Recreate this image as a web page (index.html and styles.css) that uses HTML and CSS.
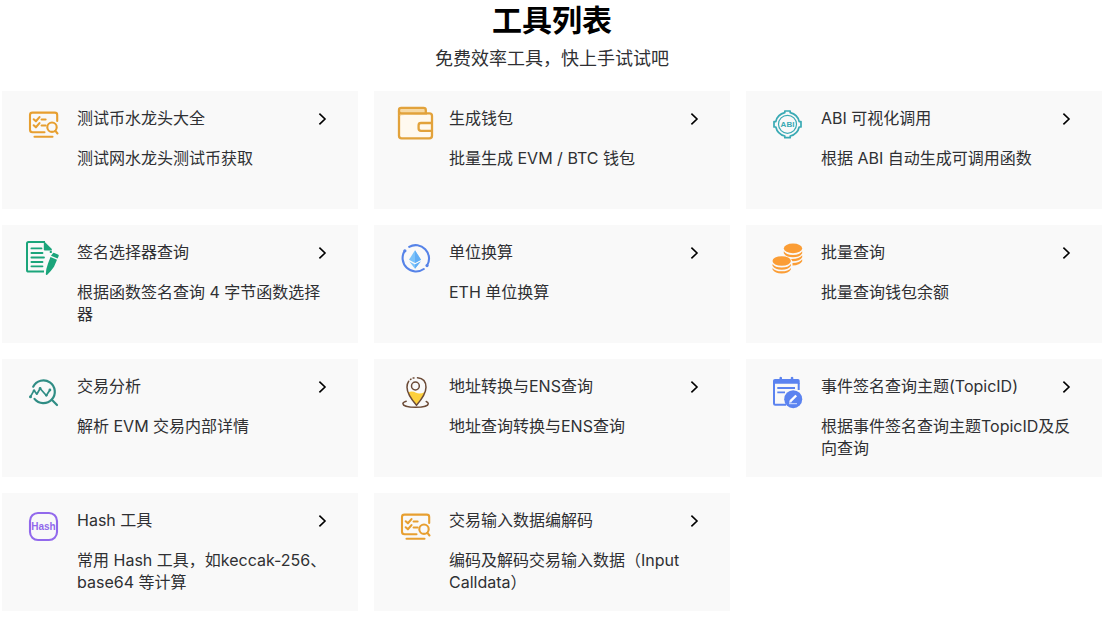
FILE: index.html
```html
<!DOCTYPE html>
<html lang="zh-CN">
<head>
<meta charset="utf-8">
<meta name="viewport" content="width=device-width, initial-scale=1">
<title>工具列表</title>
<link rel="stylesheet" href="styles.css">
</head>
<body>
<svg class="symbols" aria-hidden="true">
  <symbol id="checklist" viewBox="9 8 40 40">
    <g fill="none" stroke="#e79f30" stroke-width="2.1" stroke-linecap="round" stroke-linejoin="round">
      <path d="M29.5 37.2H17.5Q15 37.2 15 34.7V20Q15 17.6 17.5 17.6H39.8Q42.2 17.6 42.2 20V26"/>
      <path d="M18.7 24.3l2.2 2 3.6-4.2M26.6 24.5h4M18.7 30.3l2.2 2 3.6-4.2M26.6 30.5h4M19.5 41.8h18"/>
      <circle cx="37" cy="32.2" r="4.7"/><path d="M40.4 35.8l2.1 2.7"/>
    </g>
  </symbol>
  <symbol id="chevron" viewBox="0 0 16 16">
    <path d="M5.4 3.6L11 9L5.4 14.4" fill="none" stroke="#000" stroke-width="1.6"/>
  </symbol>
</svg>
<main class="page">
  <header class="heading">
    <h1 class="heading-title">工具列表</h1>
    <p class="heading-note">免费效率工具，快上手试试吧</p>
  </header>
  <div class="grid">
    <a class="card" href="#">
      <svg class="icon" aria-hidden="true"><use href="#checklist"/></svg>
      <div class="body">
        <h2 class="title">测试币水龙头大全<svg class="arrow" aria-hidden="true"><use href="#chevron"/></svg></h2>
        <p class="text">测试网水龙头测试币获取</p>
      </div>
    </a>
    <a class="card" href="#">
      <svg class="icon" viewBox="6 8 40 40" aria-hidden="true">
        <g fill="none" stroke="#e2a23b" stroke-width="2.3" stroke-linejoin="round">
          <rect x="9" y="18.3" width="33" height="25" rx="2.6" fill="#fff9ef"/>
          <path d="M9 20.5V15Q9 12.9 11.2 12.9H33.5Q35.8 12.9 35.8 15V18.3" fill="#f6d9a4"/>
          <path d="M42 28H31Q28.6 28 28.6 30.3V33.5Q28.6 35.8 31 35.8H42"/>
          <path d="M9 16.5Q9 18.3 11.5 18.3H37"/>
        </g>
      </svg>
      <div class="body">
        <h2 class="title">生成钱包<svg class="arrow" aria-hidden="true"><use href="#chevron"/></svg></h2>
        <p class="text">批量生成 EVM / BTC 钱包</p>
      </div>
    </a>
    <a class="card" href="#">
      <svg class="icon" viewBox="8 8 40 40" aria-hidden="true">
        <g fill="none" stroke="#39aab4" stroke-width="1.7" stroke-linejoin="round">
          <path d="M24.8 17.7V16H30.2V17.7Q37.6 19.5 39.2 26.6H41V32H39.2Q37.6 39.1 30.2 41V42.7H24.8V41Q17.4 39.1 15.8 32H14V26.6H15.8Q17.4 19.5 24.8 17.7Z"/>
          <circle cx="27.5" cy="29.3" r="9" stroke-width="1.2"/>
        </g>
        <text x="27.5" y="32" class="abi" text-anchor="middle">ABI</text>
      </svg>
      <div class="body">
        <h2 class="title">ABI 可视化调用<svg class="arrow" aria-hidden="true"><use href="#chevron"/></svg></h2>
        <p class="text">根据 ABI 自动生成可调用函数</p>
      </div>
    </a>
    <a class="card" href="#">
      <svg class="icon" viewBox="9 7 40 40" aria-hidden="true">
        <path d="M30 12H13.5Q12 12 12 13.5V40Q12 41.6 13.5 41.6H29M35.8 21V23" fill="none" stroke="#1ba57b" stroke-width="2"/>
        <path d="M28.8 11L36.8 19V20.5H29.8Q28.8 20.5 28.8 19.5Z" fill="#1ba57b"/>
        <path d="M16.4 18.4H26.5M16.4 23H27.5M16.4 27.5H29M16.4 32H27.5M16.4 36.3H27.5" stroke="#1ba57b" stroke-width="1.8" stroke-linecap="round"/>
        <path d="M37.7 23.4Q38.4 22.6 39.3 23L43 24.5Q44 25 43.7 26L42.6 28.5L36 25.8ZM35.5 27L42 29.7L39 36.7Q36 41.2 32 45Q30.8 45.2 30.8 44Q31 38.6 33 33.5Z" fill="#1ba57b"/>
      </svg>
      <div class="body">
        <h2 class="title">签名选择器查询<svg class="arrow" aria-hidden="true"><use href="#chevron"/></svg></h2>
        <p class="text">根据函数签名查询 4 字节函数选择器</p>
      </div>
    </a>
    <a class="card" href="#">
      <svg class="icon" viewBox="6 7 40 40" aria-hidden="true">
        <g fill="none" stroke="#5683e8" stroke-width="2.1" stroke-linecap="round">
          <path d="M19.2 16.8A13.4 13.4 0 0 1 37.2 35.3M33.8 39A13.4 13.4 0 0 1 14.7 20.9"/>
        </g>
        <circle cx="14.9" cy="20.8" r="1.6" fill="#5683e8"/><circle cx="37" cy="35.6" r="1.6" fill="#5683e8"/>
        <path d="M25 20.3L31 29.8L25 33L19 29.8Z" fill="#7bc3fa"/>
        <path d="M25 20.3L31 29.8L25 33Z" fill="#61aef5"/>
        <path d="M19.3 31.4L25 34.5L30.7 31.4L25 38.8Z" fill="#7bc3fa"/>
        <path d="M25 34.5L30.7 31.4L25 38.8Z" fill="#61aef5"/>
      </svg>
      <div class="body">
        <h2 class="title">单位换算<svg class="arrow" aria-hidden="true"><use href="#chevron"/></svg></h2>
        <p class="text">ETH 单位换算</p>
      </div>
    </a>
    <a class="card" href="#">
      <svg class="icon" viewBox="8 7 40 40" aria-hidden="true">
        <g fill="#fb9d35">
          <ellipse cx="33" cy="18.4" rx="9.2" ry="4.8"/>
          <path d="M23.8 21.3Q26 25 33 25Q40 25 42.2 21.3V23.2Q40 27.3 33 27.3Q26 27.3 23.8 23.2ZM31 29Q39.5 29.2 42.2 25.3V27.2Q40 31 32.5 31.3ZM32.5 33.1Q40 32.9 42.2 29.3V31.2Q40 35.2 32.5 35.5Z"/>
          <ellipse cx="21.7" cy="31" rx="9.2" ry="4.8"/>
          <path d="M12.5 34Q15 37.6 21.7 37.6Q28.4 37.6 30.9 34V35.8Q28.4 39.8 21.7 39.8Q15 39.8 12.5 35.8ZM12.5 37.9Q15 41.3 21.7 41.3Q28.4 41.3 30.9 37.9V39.5Q28.4 43.5 21.7 43.5Q15 43.5 12.5 39.5Z"/>
        </g>
      </svg>
      <div class="body">
        <h2 class="title">批量查询<svg class="arrow" aria-hidden="true"><use href="#chevron"/></svg></h2>
        <p class="text">批量查询钱包余额</p>
      </div>
    </a>
    <a class="card" href="#">
      <svg class="icon" viewBox="9 6 40 40" aria-hidden="true">
        <g fill="none" stroke="#308d85" stroke-width="2.2" stroke-linecap="round" stroke-linejoin="round">
          <path d="M18.2 21.7A11.4 11.4 0 1 1 19.5 33.9M36.8 34.8L42 40" />
          <path d="M15.5 31.7L19 25.3L21.8 29.2L25.1 23.5L31.3 30.5L34.9 25" stroke-width="1.7"/>
        </g>
        <g fill="#308d85"><circle cx="15.5" cy="31.7" r="1.5"/><circle cx="19" cy="25.7" r="1.3"/><circle cx="25.1" cy="23.5" r="1.4"/><circle cx="31.3" cy="30.3" r="1.3"/><circle cx="34.9" cy="25" r="1.4"/></g>
      </svg>
      <div class="body">
        <h2 class="title">交易分析<svg class="arrow" aria-hidden="true"><use href="#chevron"/></svg></h2>
        <p class="text">解析 EVM 交易内部详情</p>
      </div>
    </a>
    <a class="card" href="#">
      <svg class="icon" viewBox="6 6 40 40" aria-hidden="true">
        <path d="M18 27.5Q22 25.5 26 27.8Q30 29.7 34.7 27Q33 32 26.5 39.5Q20 33 18 27.5Z" fill="#fdd03c"/>
        <g fill="none" stroke="#6b4a36" stroke-width="1.5" stroke-linecap="round">
          <path d="M27.5 12.8Q36 13.5 36 22.3Q36 29.5 26.5 40.2Q17 29.5 17 22.3Q17 18.5 18.7 16.2M20.5 14.5L21 14.1M23.2 13.1L24 12.9"/>
          <circle cx="25.4" cy="21" r="3.9"/>
          <path d="M16.2 36.2Q12.8 37.2 12.9 38.7C13.3 43.5 38 43.5 38.3 38.7Q38.2 37.2 36.2 36.5"/>
        </g>
      </svg>
      <div class="body">
        <h2 class="title">地址转换与ENS查询<svg class="arrow" aria-hidden="true"><use href="#chevron"/></svg></h2>
        <p class="text">地址查询转换与ENS查询</p>
      </div>
    </a>
    <a class="card" href="#">
      <svg class="icon" viewBox="8 6 40 40" aria-hidden="true">
        <path d="M14 18V38.5Q14 39.7 15.2 39.7H26M38.7 18V25" fill="none" stroke="#5b83f0" stroke-width="2"/>
        <path d="M15 14H19.5V12.5Q20.7 11.2 22 12.5V14H30.8V12.5Q32 11.2 33.3 12.5V14H38Q39.7 14 39.7 15.7V18.8H13V15.7Q13 14 15 14Z" fill="#5b83f0"/>
        <path d="M17.3 23H35M17.3 27.3H25" stroke="#5b83f0" stroke-width="1.8"/>
        <circle cx="33.2" cy="34.2" r="9" fill="#5b83f0"/>
        <path d="M30.5 36.2L36.2 30.5" stroke="#fff" stroke-width="2.4"/><path d="M29.1 37.7L29.8 35.2L31.8 37.2Z" fill="#fff"/><path d="M29 38.7H37" stroke="#d6e1ff" stroke-width="1"/>
      </svg>
      <div class="body">
        <h2 class="title">事件签名查询主题(TopicID)<svg class="arrow" aria-hidden="true"><use href="#chevron"/></svg></h2>
        <p class="text">根据事件签名查询主题TopicID及反向查询</p>
      </div>
    </a>
    <a class="card" href="#">
      <svg class="icon" viewBox="9 5 40 40" aria-hidden="true">
        <rect x="15" y="13" width="27" height="27" rx="8" fill="none" stroke="#9269ec" stroke-width="2.1"/>
        <text x="28.5" y="30" class="hash" text-anchor="middle">Hash</text>
      </svg>
      <div class="body">
        <h2 class="title">Hash 工具<svg class="arrow" aria-hidden="true"><use href="#chevron"/></svg></h2>
        <p class="text">常用 Hash 工具，如keccak-256、base64 等计算</p>
      </div>
    </a>
    <a class="card" href="#">
      <svg class="icon" aria-hidden="true"><use href="#checklist"/></svg>
      <div class="body">
        <h2 class="title">交易输入数据编解码<svg class="arrow" aria-hidden="true"><use href="#chevron"/></svg></h2>
        <p class="text">编码及解码交易输入数据（Input Calldata）</p>
      </div>
    </a>
  </div>
</main>
</body>
</html>
```
FILE: styles.css
```css
* { box-sizing: border-box; }
body {
  margin: 0;
  background: #fff;
  color: #2f3033;
  font: 16px/22px Inter, "Noto Sans CJK SC", sans-serif;
}
.symbols { position: absolute; width: 0; height: 0; }
.page { padding: 0 10px 12px 2px; }
.heading { text-align: center; }
.heading-title {
  margin: 0;
  color: #000;
  font-size: 30px;
  line-height: 40px;
  font-weight: 700;
}
.heading-note {
  margin: 5px 0 18px;
  font-size: 18px;
  line-height: 28px;
}
.grid {
  display: grid;
  grid-template-columns: repeat(3, 1fr);
  gap: 16px;
}
.card {
  display: flex;
  gap: 13px;
  min-height: 118px;
  padding: 12px 28px 14px 22px;
  background: #f9f9f9;
  color: inherit;
  text-decoration: none;
}
.icon { flex: none; width: 40px; height: 40px; }
.body { flex: 1; min-width: 0; padding-top: 4px; }
.title {
  display: flex;
  align-items: center;
  justify-content: space-between;
  margin: 0 0 18px;
  font-size: 16px;
  line-height: 22px;
  font-weight: 400;
}
.arrow { width: 16px; height: 16px; }
.text { margin: 0; }
.abi { font: 700 8px "Liberation Sans", sans-serif; fill: #39aab4; }
.hash { font: 700 10px "Liberation Sans", sans-serif; fill: #9269ec; }
```
